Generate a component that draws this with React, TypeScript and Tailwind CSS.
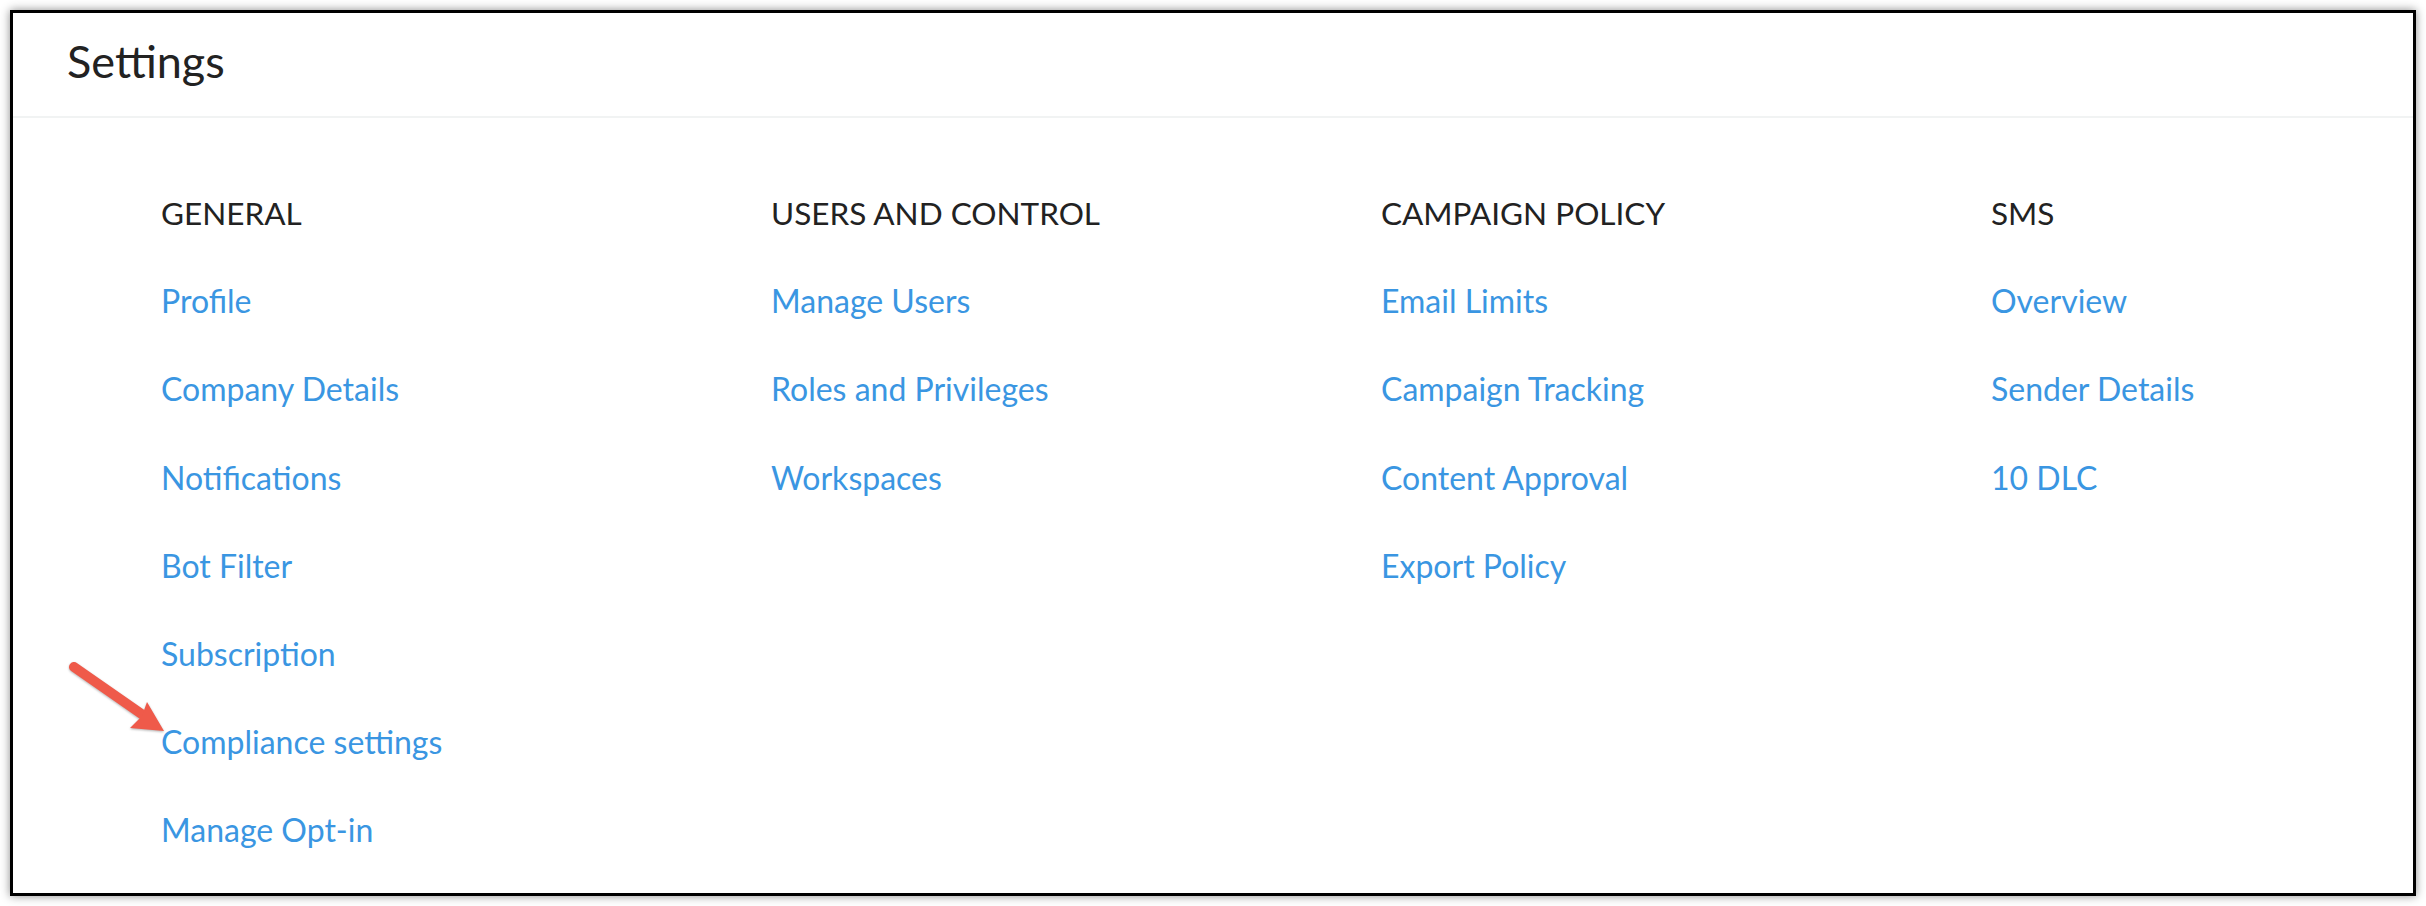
import React from "react";

const columns: { title: string; items: string[] }[] = [
  {
    title: "GENERAL",
    items: [
      "Profile",
      "Company Details",
      "Notifications",
      "Bot Filter",
      "Subscription",
      "Compliance settings",
      "Manage Opt-in",
    ],
  },
  {
    title: "USERS AND CONTROL",
    items: ["Manage Users", "Roles and Privileges", "Workspaces"],
  },
  {
    title: "CAMPAIGN POLICY",
    items: ["Email Limits", "Campaign Tracking", "Content Approval", "Export Policy"],
  },
  {
    title: "SMS",
    items: ["Overview", "Sender Details", "10 DLC"],
  },
];

export default function App() {
  return (
    <div
      className="relative w-[2426px] h-[906px] bg-white overflow-hidden pt-[10px] pl-[10px]"
      style={{ fontFamily: "Lato, 'Open Sans', 'Liberation Sans', sans-serif" }}
    >
      <div className="w-[2406px] h-[886px] border-[3px] border-black bg-white shadow-[0_0_9px_rgba(0,0,0,0.45)] flex flex-col">
        <div className="h-[105px] pt-[21px] pl-[54px] border-b-2 border-[#f1f3f3]">
          <h1 className="text-[45px] leading-[54px] text-[#222222] font-normal">Settings</h1>
        </div>
        <div className="flex pl-[148px] pt-[51px]">
          {columns.map((col) => (
            <div key={col.title} className="w-[610px] shrink-0 flex flex-col">
              <div className="h-[88.2px] leading-[88.2px] text-[31.5px] text-[#222222] whitespace-nowrap">
                {col.title}
              </div>
              {col.items.map((item) => (
                <a
                  key={item}
                  href="#"
                  className="h-[88.2px] leading-[88.2px] text-[32px] text-[#3a96e2] whitespace-nowrap"
                >
                  {item}
                </a>
              ))}
            </div>
          ))}
        </div>
      </div>

      <svg
        className="absolute left-[50px] top-[640px] w-[130px] h-[110px] drop-shadow-[0_1px_1px_rgba(0,0,0,0.3)]"
        viewBox="0 0 130 110"
      >
        <line x1="24" y1="27" x2="93" y2="75" stroke="#ef5a4a" strokeWidth="10" strokeLinecap="round" />
        <polygon points="114,91 97,62 92,76 80,88" fill="#ef5a4a" />
      </svg>
    </div>
  );
}
